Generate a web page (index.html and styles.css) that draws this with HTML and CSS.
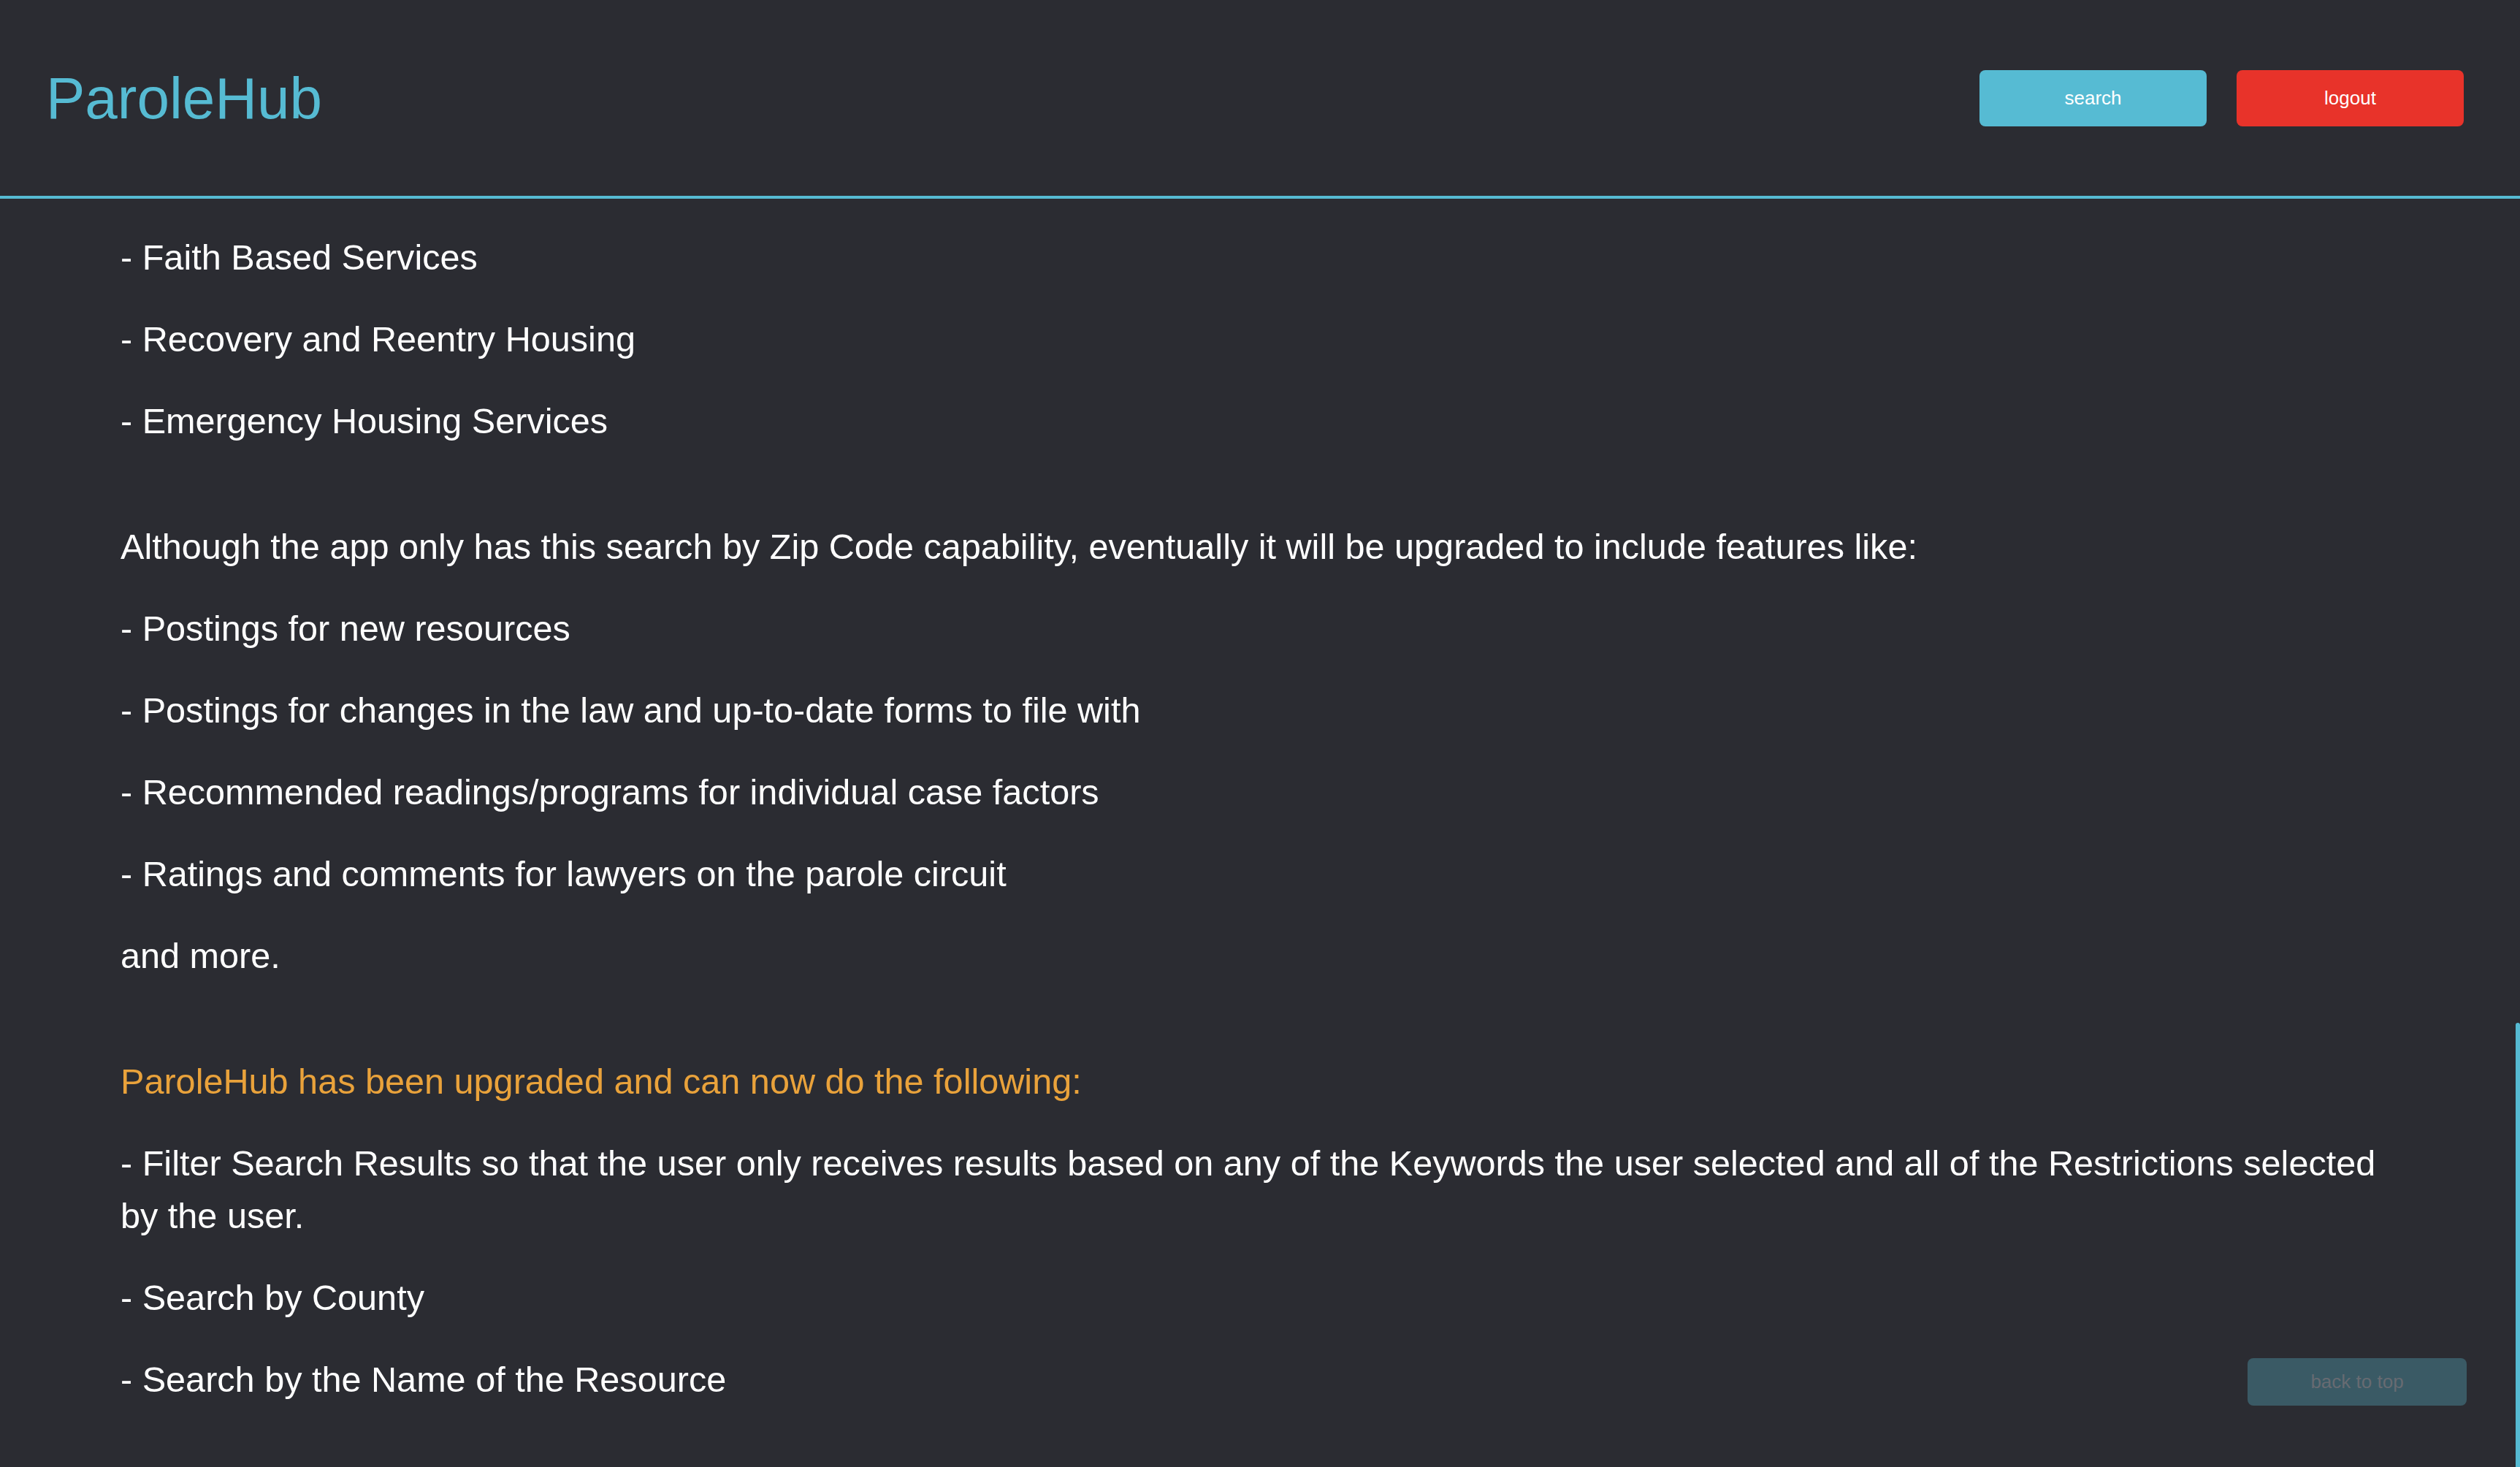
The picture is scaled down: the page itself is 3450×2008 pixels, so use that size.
FILE: index.html
```html
<!DOCTYPE html>
<html lang="en">
<head>
<meta charset="utf-8">
<title>ParoleHub</title>
<link rel="stylesheet" href="styles.css">
</head>
<body>
<header class="topbar">
  <div class="logo">ParoleHub</div>
  <nav class="actions">
    <button class="btn btn-search">search</button>
    <button class="btn btn-logout">logout</button>
  </nav>
</header>
<main class="content">
  <section class="group">
    <p>- Faith Based Services</p>
    <p>- Recovery and Reentry Housing</p>
    <p>- Emergency Housing Services</p>
  </section>
  <section class="group">
    <p>Although the app only has this search by Zip Code capability, eventually it will be upgraded to include features like:</p>
    <p>- Postings for new resources</p>
    <p>- Postings for changes in the law and up-to-date forms to file with</p>
    <p>- Recommended readings/programs for individual case factors</p>
    <p>- Ratings and comments for lawyers on the parole circuit</p>
    <p>and more.</p>
  </section>
  <section class="group">
    <p class="highlight">ParoleHub has been upgraded and can now do the following:</p>
    <p>- Filter Search Results so that the user only receives results based on any of the Keywords the user selected and all of the Restrictions selected by the user.</p>
    <p>- Search by County</p>
    <p>- Search by the Name of the Resource</p>
  </section>
</main>
<button class="back-to-top">back to top</button>
<div class="scroll-thumb"></div>
</body>
</html>
```
FILE: styles.css
```css
html, body {
  margin: 0;
  padding: 0;
  background: #2b2c32;
  overflow: hidden;
}
body {
  font-family: "Liberation Sans", Arial, Helvetica, sans-serif;
  color: #ffffff;
  min-height: 2008px;
}
.topbar {
  display: flex;
  align-items: center;
  justify-content: space-between;
  height: 268px;
  padding: 0 77px 0 63px;
  border-bottom: 4px solid #56bbd3;
}
.logo {
  font-size: 80px;
  color: #56bbd3;
  line-height: 1.15;
  padding-top: 2px;
}
.actions {
  display: flex;
  gap: 41px;
}
.btn {
  width: 311px;
  height: 77px;
  border: none;
  border-radius: 8px;
  color: #ffffff;
  font-family: "Liberation Sans", Arial, sans-serif;
  font-size: 26px;
  padding: 0;
}
.btn-search { background: #56bbd3; }
.btn-logout { background: #e8332a; }
.content {
  padding: 44px 165px 0 165px;
}
.group {
  margin-bottom: 100px;
}
.content p {
  margin: 0 0 40px 0;
  font-size: 48.6px;
  line-height: 72px;
}
.content p.highlight {
  color: #e9a23b;
}
.back-to-top {
  position: fixed;
  right: 73px;
  bottom: 84px;
  width: 300px;
  height: 65px;
  border: none;
  border-radius: 8px;
  background: #3a5a65;
  color: #676b72;
  font-family: "Liberation Sans", Arial, sans-serif;
  font-size: 26px;
  padding: 0;
}
.scroll-thumb {
  position: fixed;
  right: 0;
  top: 1400px;
  width: 6px;
  height: 608px;
  background: #56bbd3;
  border-radius: 3px 3px 0 0;
}
```
